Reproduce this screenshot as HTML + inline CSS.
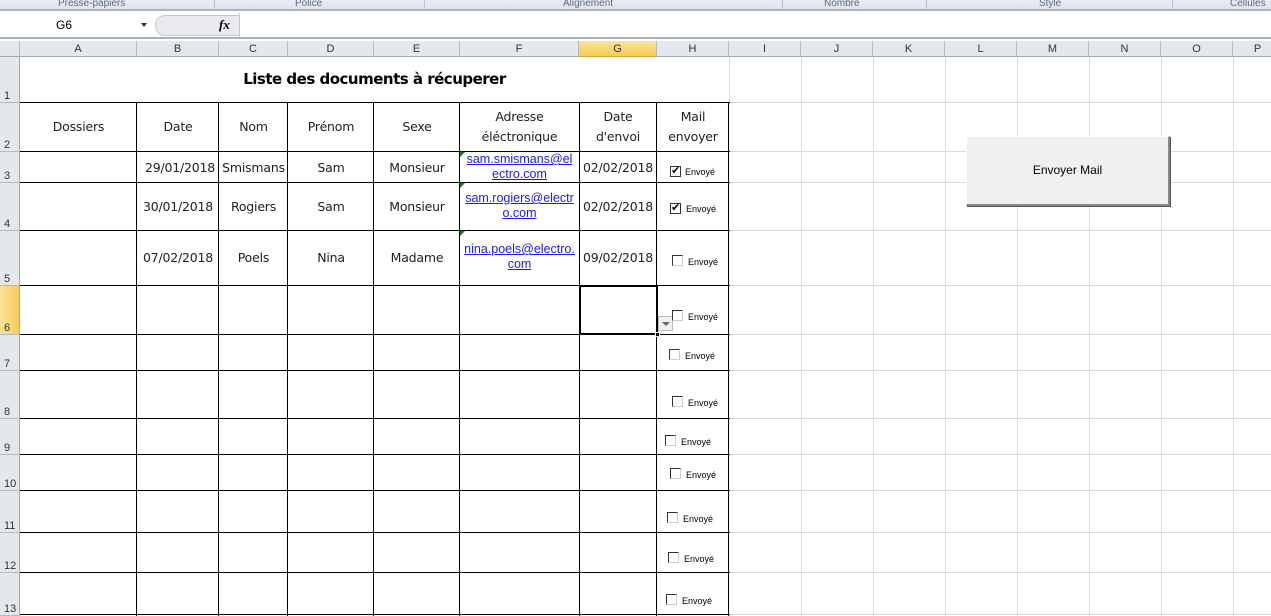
<!DOCTYPE html>
<html><head><meta charset="utf-8"><style>
*{margin:0;padding:0;box-sizing:border-box}
body{width:1271px;height:616px;overflow:hidden;background:#fff;font-family:"Liberation Sans",sans-serif;position:relative}
.a{position:absolute}
.rib{left:0;top:0;width:1271px;height:11px;background:linear-gradient(#e9edf3,#dde3ec);border-bottom:2px solid #a9b3c1;font-size:10px;color:#5d6b7e;line-height:8px}
.rib span{position:absolute;top:0}
.rib i{position:absolute;top:0;width:1px;height:10px;background:#b8c2cf}
.fb{left:0;top:13px;width:1271px;height:26px;background:#fff;border-bottom:2px solid #a9b1bb}
.hd{top:41px;height:16px;background:#e4e7ec;border-bottom:1px solid #9ea7b3;font-size:11px;color:#333;text-align:center;line-height:16px;border-right:1px solid #b3b9c2}
.rh{left:0;width:20px;background:#e4e7ec;border-right:1px solid #9ea7b3;border-bottom:1px solid #b3b9c2;font-size:11px;color:#333}
.rh span{position:absolute;left:4px;bottom:0}
.vl{width:1px;background:#d9d9d9}
.hl{height:1px;background:#d9d9d9}
.bk{background:#000}
.t{font-family:"DejaVu Sans","Liberation Sans",sans-serif;font-size:12.5px;color:#222;text-align:center;letter-spacing:-0.2px}
.lk{font-family:"Liberation Sans",sans-serif;font-size:12.5px;color:#1a1aff;text-decoration:underline;text-align:center;line-height:15px}
.cb{width:11px;height:11px;border-top:1px solid #333;border-left:1px solid #333;border-right:1px solid #ccc;border-bottom:1px solid #ccc;background:#fff}
.ev{font-size:9px;color:#000}
.tri{width:0;height:0;border-top:5px solid #1a7a1a;border-right:5px solid transparent}
</style></head><body>
<div class="a rib"><span style="left:58px">Presse-papiers</span><i style="left:214px"></i><span style="left:295px">Police</span><i style="left:424px"></i><span style="left:563px">Alignement</span><i style="left:782px"></i><span style="left:824px">Nombre</span><i style="left:926px"></i><span style="left:1039px">Style</span><i style="left:1172px"></i><span style="left:1230px">Cellules</span></div>
<div class="a fb">
 <div class="a" style="left:56px;top:5px;font-size:12px">G6</div>
 <div class="a" style="left:141px;top:10px;border-top:4px solid #333;border-left:3px solid transparent;border-right:3px solid transparent"></div>
 <div class="a" style="left:155px;top:2px;width:85px;height:21px;border-radius:10px 0 0 10px;background:#e8eaed;border:1px solid #c5c9cf"></div>
 <div class="a" style="left:219px;top:4px;font-family:'Liberation Serif',serif;font-style:italic;font-size:13px;font-weight:bold">fx</div>
 <div class="a" style="left:239px;top:0;width:1px;height:24px;background:#c5c9cf"></div>
</div>
<div class="a vl" style="left:801px;top:57px;height:559px"></div>
<div class="a vl" style="left:873px;top:57px;height:559px"></div>
<div class="a vl" style="left:945px;top:57px;height:559px"></div>
<div class="a vl" style="left:1017px;top:57px;height:559px"></div>
<div class="a vl" style="left:1089px;top:57px;height:559px"></div>
<div class="a vl" style="left:1161px;top:57px;height:559px"></div>
<div class="a vl" style="left:1233px;top:57px;height:559px"></div>
<div class="a vl" style="left:729px;top:57px;height:45px"></div>
<div class="a hl" style="left:729px;top:102px;width:542px"></div>
<div class="a hl" style="left:729px;top:151px;width:542px"></div>
<div class="a hl" style="left:729px;top:182px;width:542px"></div>
<div class="a hl" style="left:729px;top:230px;width:542px"></div>
<div class="a hl" style="left:729px;top:285px;width:542px"></div>
<div class="a hl" style="left:729px;top:334px;width:542px"></div>
<div class="a hl" style="left:729px;top:370px;width:542px"></div>
<div class="a hl" style="left:729px;top:418px;width:542px"></div>
<div class="a hl" style="left:729px;top:454px;width:542px"></div>
<div class="a hl" style="left:729px;top:490px;width:542px"></div>
<div class="a hl" style="left:729px;top:532px;width:542px"></div>
<div class="a hl" style="left:729px;top:572px;width:542px"></div>
<div class="a hl" style="left:729px;top:614px;width:542px"></div>
<div class="a bk" style="left:20px;top:102px;width:710px;height:1px"></div>
<div class="a bk" style="left:20px;top:151px;width:710px;height:1px"></div>
<div class="a bk" style="left:20px;top:182px;width:710px;height:1px"></div>
<div class="a bk" style="left:20px;top:230px;width:710px;height:1px"></div>
<div class="a bk" style="left:20px;top:285px;width:710px;height:1px"></div>
<div class="a bk" style="left:20px;top:334px;width:710px;height:1px"></div>
<div class="a bk" style="left:20px;top:370px;width:710px;height:1px"></div>
<div class="a bk" style="left:20px;top:418px;width:710px;height:1px"></div>
<div class="a bk" style="left:20px;top:454px;width:710px;height:1px"></div>
<div class="a bk" style="left:20px;top:490px;width:710px;height:1px"></div>
<div class="a bk" style="left:20px;top:532px;width:710px;height:1px"></div>
<div class="a bk" style="left:20px;top:572px;width:710px;height:1px"></div>
<div class="a bk" style="left:20px;top:614px;width:710px;height:1px"></div>
<div class="a bk" style="left:136px;top:102px;width:1px;height:514px"></div>
<div class="a bk" style="left:218px;top:102px;width:1px;height:514px"></div>
<div class="a bk" style="left:287px;top:102px;width:1px;height:514px"></div>
<div class="a bk" style="left:373px;top:102px;width:1px;height:514px"></div>
<div class="a bk" style="left:459px;top:102px;width:1px;height:514px"></div>
<div class="a bk" style="left:579px;top:102px;width:1px;height:514px"></div>
<div class="a bk" style="left:656px;top:102px;width:1px;height:514px"></div>
<div class="a bk" style="left:728px;top:102px;width:1px;height:514px"></div>
<div class="a hd" style="left:0;width:20px"></div>
<div class="a hd" style="left:20px;width:117px">A</div>
<div class="a hd" style="left:137px;width:82px">B</div>
<div class="a hd" style="left:219px;width:69px">C</div>
<div class="a hd" style="left:288px;width:86px">D</div>
<div class="a hd" style="left:374px;width:86px">E</div>
<div class="a hd" style="left:460px;width:119px">F</div>
<div class="a hd" style="left:579px;width:78px;background:linear-gradient(#fbe39a,#f8cc55);border-bottom:1px solid #e0a52e">G</div>
<div class="a hd" style="left:657px;width:72px">H</div>
<div class="a hd" style="left:729px;width:72px">I</div>
<div class="a hd" style="left:801px;width:72px">J</div>
<div class="a hd" style="left:873px;width:72px">K</div>
<div class="a hd" style="left:945px;width:72px">L</div>
<div class="a hd" style="left:1017px;width:72px">M</div>
<div class="a hd" style="left:1089px;width:72px">N</div>
<div class="a hd" style="left:1161px;width:72px">O</div>
<div class="a hd" style="left:1233px;width:50px">P</div>
<div class="a rh" style="top:57px;height:46px"><span>1</span></div>
<div class="a rh" style="top:103px;height:49px"><span>2</span></div>
<div class="a rh" style="top:152px;height:31px"><span>3</span></div>
<div class="a rh" style="top:183px;height:48px"><span>4</span></div>
<div class="a rh" style="top:231px;height:55px"><span>5</span></div>
<div class="a rh" style="top:286px;height:49px;background:linear-gradient(90deg,#fbe39a,#f8cc55);border-right-color:#e0a52e"><span>6</span></div>
<div class="a rh" style="top:335px;height:36px"><span>7</span></div>
<div class="a rh" style="top:371px;height:48px"><span>8</span></div>
<div class="a rh" style="top:419px;height:36px"><span>9</span></div>
<div class="a rh" style="top:455px;height:36px"><span>10</span></div>
<div class="a rh" style="top:491px;height:42px"><span>11</span></div>
<div class="a rh" style="top:533px;height:40px"><span>12</span></div>
<div class="a rh" style="top:573px;height:43px"><span>13</span></div>
<div class="a t" style="left:20px;top:70px;width:709px;font-size:15px;font-weight:bold;color:#000;letter-spacing:-0.5px">Liste des documents à récuperer</div>
<div class="a t" style="left:20px;top:119px;width:117px">Dossiers</div>
<div class="a t" style="left:137px;top:119px;width:82px">Date</div>
<div class="a t" style="left:219px;top:119px;width:69px">Nom</div>
<div class="a t" style="left:288px;top:119px;width:86px">Prénom</div>
<div class="a t" style="left:374px;top:119px;width:86px">Sexe</div>
<div class="a t" style="left:460px;top:107px;width:119px;line-height:20px">Adresse<br>éléctronique</div>
<div class="a t" style="left:579px;top:107px;width:78px;line-height:20px">Date<br>d'envoi</div>
<div class="a t" style="left:657px;top:107px;width:72px;line-height:20px">Mail<br>envoyer</div>
<div class="a t" style="left:137px;top:160px;width:82px;text-align:right;padding-right:4px">29/01/2018</div>
<div class="a t" style="left:219px;top:160px;width:69px">Smismans</div>
<div class="a t" style="left:288px;top:160px;width:86px">Sam</div>
<div class="a t" style="left:374px;top:160px;width:86px">Monsieur</div>
<div class="a t" style="left:579px;top:160px;width:78px">02/02/2018</div>
<div class="a t" style="left:137px;top:199px;width:82px;text-align:right;padding-right:6px">30/01/2018</div>
<div class="a t" style="left:219px;top:199px;width:69px">Rogiers</div>
<div class="a t" style="left:288px;top:199px;width:86px">Sam</div>
<div class="a t" style="left:374px;top:199px;width:86px">Monsieur</div>
<div class="a t" style="left:579px;top:199px;width:78px">02/02/2018</div>
<div class="a t" style="left:137px;top:250px;width:82px;text-align:right;padding-right:6px">07/02/2018</div>
<div class="a t" style="left:219px;top:250px;width:69px">Poels</div>
<div class="a t" style="left:288px;top:250px;width:86px">Nina</div>
<div class="a t" style="left:374px;top:250px;width:86px">Madame</div>
<div class="a t" style="left:579px;top:250px;width:78px">09/02/2018</div>
<div class="a lk" style="left:460px;top:152px;width:119px">sam.smismans@el<br>ectro.com</div>
<div class="a lk" style="left:460px;top:191px;width:119px">sam.rogiers@electr<br>o.com</div>
<div class="a lk" style="left:460px;top:242px;width:119px">nina.poels@electro.<br>com</div>
<div class="a tri" style="left:460px;top:152px"></div>
<div class="a tri" style="left:460px;top:183px"></div>
<div class="a tri" style="left:460px;top:231px"></div>
<div class="a" style="left:579px;top:285px;width:79px;height:50px;border:2px solid #000;outline:1px solid #fff;outline-offset:-3px"></div>
<div class="a" style="left:655px;top:332px;width:5px;height:5px;background:#000;border:1px solid #fff"></div>
<div class="a" style="left:658px;top:316px;width:15px;height:15px;background:#f0f0f0;border:1px solid #bbb"><div class="a" style="left:3px;top:5px;border-top:4px solid #666;border-left:4px solid transparent;border-right:4px solid transparent"></div></div>
<div class="a cb" style="left:670px;top:166px;border:1px solid #333;font-size:11px;line-height:9px;text-align:center">✔</div><div class="a ev" style="left:685px;top:167px">Envoyé</div>
<div class="a cb" style="left:670px;top:203px;border:1px solid #333;font-size:11px;line-height:9px;text-align:center">✔</div><div class="a ev" style="left:686px;top:204px">Envoyé</div>
<div class="a cb" style="left:672px;top:255px"></div><div class="a ev" style="left:688px;top:257px">Envoyé</div>
<div class="a cb" style="left:672px;top:310px"></div><div class="a ev" style="left:688px;top:312px">Envoyé</div>
<div class="a cb" style="left:669px;top:349px"></div><div class="a ev" style="left:685px;top:351px">Envoyé</div>
<div class="a cb" style="left:672px;top:396px"></div><div class="a ev" style="left:688px;top:398px">Envoyé</div>
<div class="a cb" style="left:665px;top:435px"></div><div class="a ev" style="left:681px;top:437px">Envoyé</div>
<div class="a cb" style="left:670px;top:468px"></div><div class="a ev" style="left:686px;top:470px">Envoyé</div>
<div class="a cb" style="left:667px;top:512px"></div><div class="a ev" style="left:683px;top:514px">Envoyé</div>
<div class="a cb" style="left:668px;top:552px"></div><div class="a ev" style="left:684px;top:554px">Envoyé</div>
<div class="a cb" style="left:666px;top:594px"></div><div class="a ev" style="left:682px;top:596px">Envoyé</div>
<div class="a" style="left:966px;top:136px;width:204px;height:70px;background:#f0f0f0;border:1px solid #fff;border-right:2px solid #888;border-bottom:2px solid #888;box-shadow:1px 1px 0 #555;font-size:12px;text-align:center;line-height:66px;color:#000">Envoyer Mail</div>
</body></html>
